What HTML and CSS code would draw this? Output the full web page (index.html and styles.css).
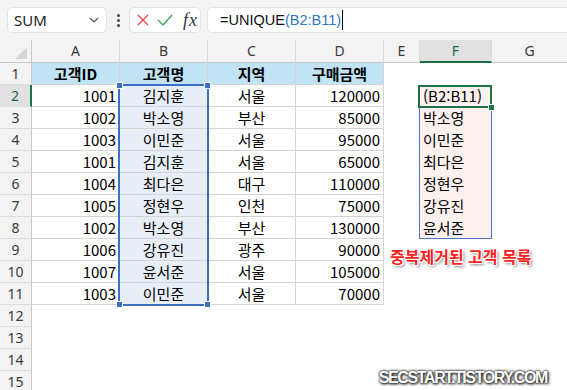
FILE: index.html
```html
<!DOCTYPE html>
<html lang="ko">
<head>
  <meta charset="UTF-8" />
  <title>UNIQUE 함수</title>
  <link rel="stylesheet" href="styles.css">
</head>
<body>
  <div class="excel">
    <!-- formula bar -->
    <div class="fbar">
      <div class="namebox">
        <span>SUM</span>
        <svg width="10" height="6" viewBox="0 0 10 6"><path d="M1 1 L5 5 L9 1" fill="none" stroke="#555" stroke-width="1.2"/></svg>
      </div>
      <div class="dots"><i></i><i></i><i></i></div>
      <div class="fxbox">
        <svg width="12" height="12" viewBox="0 0 12 12"><path d="M1 1 L11 11 M11 1 L1 11" stroke="#e2474b" stroke-width="1.4"/></svg>
        <svg class="ok" width="16" height="12" viewBox="0 0 16 12"><path d="M1 6 L6 11 L15 1" fill="none" stroke="#3ea45e" stroke-width="1.4"/></svg>
        <span class="fx">fx</span>
      </div>
      <div class="formula"><span>=UNIQUE</span><span class="ref">(B2:B11)</span><span class="caret"></span></div>
    </div>

    <div class="sheet">
      <div class="cells">
        <div class="corner"><span></span></div>
        <div class="ch">A</div><div class="ch">B</div><div class="ch">C</div><div class="ch">D</div>
        <div class="ch">E</div><div class="ch on">F</div><div class="ch last">G</div>

        <div class="rh">1</div>
        <div class="t th">고객ID</div><div class="t th">고객명</div><div class="t th">지역</div><div class="t th">구매금액</div>

        <div class="rh on">2</div>
        <div class="t num">1001</div><div class="t mid hl">김지훈</div><div class="t mid">서울</div><div class="t num">120000</div>
        <div class="sp">(B2:B11)</div>

        <div class="rh">3</div>
        <div class="t num">1002</div><div class="t mid hl">박소영</div><div class="t mid">부산</div><div class="t num">85000</div>
        <div class="sp">박소영</div>

        <div class="rh">4</div>
        <div class="t num">1003</div><div class="t mid hl">이민준</div><div class="t mid">서울</div><div class="t num">95000</div>
        <div class="sp">이민준</div>

        <div class="rh">5</div>
        <div class="t num">1001</div><div class="t mid hl">김지훈</div><div class="t mid">서울</div><div class="t num">65000</div>
        <div class="sp">최다은</div>

        <div class="rh">6</div>
        <div class="t num">1004</div><div class="t mid hl">최다은</div><div class="t mid">대구</div><div class="t num">110000</div>
        <div class="sp">정현우</div>

        <div class="rh">7</div>
        <div class="t num">1005</div><div class="t mid hl">정현우</div><div class="t mid">인천</div><div class="t num">75000</div>
        <div class="sp">강유진</div>

        <div class="rh">8</div>
        <div class="t num">1002</div><div class="t mid hl">박소영</div><div class="t mid">부산</div><div class="t num">130000</div>
        <div class="sp">윤서준</div>

        <div class="rh">9</div>
        <div class="t num">1006</div><div class="t mid hl">강유진</div><div class="t mid">광주</div><div class="t num">90000</div>

        <div class="rh">10</div>
        <div class="t num">1007</div><div class="t mid hl">윤서준</div><div class="t mid">서울</div><div class="t num">105000</div>

        <div class="rh">11</div>
        <div class="t num">1003</div><div class="t mid hl">이민준</div><div class="t mid">서울</div><div class="t num">70000</div>

        <div class="rh">12</div>
        <div class="rh">13</div>
        <div class="rh">14</div>
        <div class="rh">15</div>
      </div>

      <!-- selection layer -->
      <div class="marks">
        <div class="sel"><i class="tl"></i><i class="tr"></i><i class="bl"></i><i class="br"></i></div>
        <div class="spill"></div>
        <div class="act"><i></i></div>
        <div class="note">중복제거된 고객 목록</div>
        <div class="mark">SECSTART.TISTORY.COM</div>
      </div>
    </div>
  </div>
</body>
</html>
```

FILE: styles.css
```css
* {
  box-sizing: border-box;
  margin: 0;
  padding: 0;
}

body {
  font-family: "Noto Sans CJK KR", sans-serif;
  background: #fff;
  color: #000;
  overflow: hidden;
}

.excel {
  width: 567px;
  height: 390px;
  overflow: hidden;
}

/* formula bar */
.fbar {
  height: 40px;
  background: #f3f3f3;
  display: flex;
  align-items: center;
  padding-left: 7px;
  font-family: "Noto Sans", sans-serif;
}

.namebox, .fxbox, .formula {
  height: 26px;
  background: #fff;
  border: 1px solid #e3e3e3;
  border-radius: 5px;
  display: flex;
  align-items: center;
}

.namebox {
  width: 100px;
  justify-content: space-between;
  padding: 0 7px 0 6px;
  font-size: 15px;
  color: #222;
}

.dots {
  width: 22px;
  display: flex;
  flex-direction: column;
  align-items: center;
  gap: 2px;
}

.dots i {
  width: 3px;
  height: 3px;
  border-radius: 50%;
  background: #444;
}

.fxbox {
  width: 72px;
  padding-left: 7px;
}

.fxbox .ok {
  margin-left: 8px;
}

.fx {
  margin-left: 10px;
  font-family: "Liberation Serif", serif;
  font-style: italic;
  font-size: 18px;
  color: #333;
  letter-spacing: 1px;
}

.formula {
  flex: 1;
  margin-left: 6px;
  border-radius: 5px 0 0 5px;
  border-right: none;
  padding-left: 12px;
  font-family: "Liberation Sans", sans-serif;
  font-size: 14.5px;
  color: #111;
}

.formula .ref {
  color: #2f75c8;
}

.caret {
  width: 1px;
  height: 20px;
  background: #000;
  margin-left: 1px;
}

/* sheet */
.sheet {
  display: grid;
}

.cells, .marks {
  grid-area: 1 / 1;
  display: grid;
  grid-template-columns: 32px 88px 88px 88px 88px 36px 72px 1fr;
  grid-template-rows: 23px repeat(15, 22px);
}

.corner {
  background: #f3f3f3;
  border-right: 1px solid #c8c8c8;
  border-bottom: 1px solid #c8c8c8;
  position: relative;
}

.corner span {
  position: absolute;
  right: 4px;
  bottom: 3px;
  border-left: 12px solid transparent;
  border-bottom: 12px solid #d6d6d6;
}

.ch {
  background: #f3f3f3;
  border-right: 1px solid #dadada;
  border-bottom: 1px solid #c8c8c8;
  text-align: center;
  font: 14px/22px "Noto Sans", sans-serif;
  color: #3a3a3a;
}

.ch.on {
  background: #e1e1e1;
  color: #1e6b41;
  border-bottom: 2px solid #1e7145;
}

.ch.last {
  border-right: none;
}

.rh {
  grid-column: 1;
  background: #f3f3f3;
  border-right: 1px solid #c8c8c8;
  border-bottom: 1px solid #dcdcdc;
  text-align: center;
  font: 14px/21px "Noto Sans", sans-serif;
  color: #3a3a3a;
}

.rh.on {
  background: #e1e1e1;
  color: #1e6b41;
  border-right: 2px solid #1e7145;
}

.t {
  border-right: 1px solid #d4d4d4;
  border-bottom: 1px solid #d4d4d4;
  font-size: 15px;
  line-height: 21px;
  white-space: nowrap;
}

.th {
  background: #c0e4f5;
  font-weight: bold;
  text-align: center;
}

.num {
  text-align: right;
  padding-right: 3px;
}

.mid {
  text-align: center;
}

.hl {
  background: #e8eef8;
}

.sp {
  grid-column: 7;
  background: #fdf1ef;
  padding-left: 3px;
  font-size: 15px;
  line-height: 21px;
  white-space: nowrap;
}

/* overlays */
.marks {
  pointer-events: none;
}

.sel {
  grid-column: 3;
  grid-row: 3 / 13;
  margin: -1px -1px -1px -2px;
  border: 2px solid #3b6fc6;
  position: relative;
}

.sel i {
  position: absolute;
  width: 5px;
  height: 5px;
  background: #3b6fc6;
  outline: 1px solid #fff;
}

.sel .tl { left: -3px; top: -3px; }
.sel .tr { right: -3px; top: -3px; }
.sel .bl { left: -3px; bottom: -3px; }
.sel .br { right: -3px; bottom: -3px; }

.spill {
  grid-column: 7;
  grid-row: 3 / 10;
  margin-left: -1px;
  border: 1px solid #4a74c4;
}

.act {
  grid-column: 7;
  grid-row: 3;
  margin: 0 0 -1px -2px;
  border: 2px solid #217346;
  position: relative;
}

.act i {
  position: absolute;
  right: -4px;
  bottom: -4px;
  width: 5px;
  height: 5px;
  background: #217346;
  outline: 1px solid #fff;
}

.note {
  grid-column: 6 / 9;
  grid-row: 10 / 12;
  padding: 6px 0 0 6px;
  font-size: 16px;
  line-height: 22px;
  font-weight: bold;
  color: #ff1f1f;
  white-space: nowrap;
  text-shadow: -1px -1px 0 #fff, 1px -1px 0 #fff, -1px 1px 0 #fff, 1px 1px 0 #fff,
    2px 2px 3px rgba(0, 0, 0, 0.55);
}

.mark {
  grid-column: 5 / 9;
  grid-row: 16;
  justify-self: end;
  margin: -3px 20px 0 0;
  font-family: "Liberation Sans", sans-serif;
  font-weight: bold;
  font-size: 16px;
  line-height: 20px;
  letter-spacing: -1.4px;
  color: #fff;
  text-shadow: 0 0 2px #222, 0 0 3px #333, 1px 1px 3px #000;
}
```
